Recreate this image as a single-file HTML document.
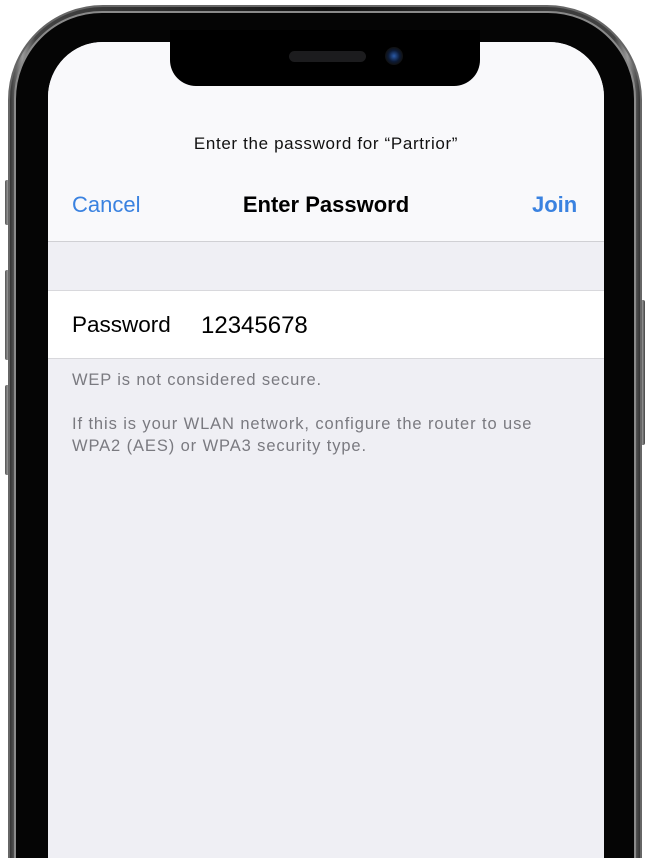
<!DOCTYPE html><html><head><style>
*{margin:0;padding:0;box-sizing:border-box}
html,body{width:650px;height:858px;overflow:hidden}
body{background:#fff;font-family:"Liberation Sans",sans-serif}
#w{position:relative;width:650px;height:858px;overflow:hidden}
.btn{position:absolute;background:linear-gradient(90deg,#555,#999,#444);border-radius:2px}
.steel{position:absolute;left:8px;top:5px;width:634px;height:960px;border-radius:95px;background:linear-gradient(90deg,#333,#999 2%,#444 4%,#111 50%,#444 96%,#999 98%,#333);border:2px solid #666}
.steel2{position:absolute;left:14px;top:11px;width:622px;height:950px;border-radius:88px;background:#050505;border:2px solid #8a8a8a}
.screen{position:absolute;left:48px;top:42px;width:556px;height:900px;border-radius:55px;background:#efeff4;overflow:hidden}
.notch{position:absolute;left:170px;top:30px;width:310px;height:56px;background:#000;border-radius:0 0 26px 26px}
.spk{position:absolute;left:289px;top:51px;width:77px;height:11px;border-radius:6px;background:#1c1c1e}
.cam{position:absolute;left:385px;top:47px;width:18px;height:18px;border-radius:50%;background:radial-gradient(circle,#2a5aa8 0,#0c1a35 45%,#111 70%)}
.top{position:absolute;left:0;top:0;width:556px;height:200px;background:#f9f9fb;border-bottom:1px solid #d0d0d4}
.t{position:absolute;white-space:nowrap}
</style></head><body><div id="w">
<div class="btn" style="left:5px;top:180px;width:6px;height:45px"></div>
<div class="btn" style="left:5px;top:270px;width:6px;height:90px"></div>
<div class="btn" style="left:5px;top:385px;width:6px;height:90px"></div>
<div class="btn" style="left:639px;top:300px;width:6px;height:145px"></div>
<div class="steel"></div><div class="steel2"></div>
<div class="screen">
<div class="top"></div>
<div class="t" style="left:0;width:556px;text-align:center;top:92px;font-size:17px;letter-spacing:.65px;color:#111">Enter the password for “Partrior”</div>
<div class="t" style="left:24px;top:150px;font-size:22px;color:#3a82e0">Cancel</div>
<div class="t" style="left:0;width:556px;text-align:center;top:150px;font-size:22px;font-weight:bold;color:#000">Enter Password</div>
<div class="t" style="left:484px;top:150px;font-size:22px;color:#3a82e0;font-weight:bold">Join</div>
<div style="position:absolute;left:0;top:248px;width:556px;height:69px;background:#fff;border-top:1px solid #d8d8dc;border-bottom:1px solid #d8d8dc"></div>
<div class="t" style="left:24px;top:270px;font-size:22.5px;color:#000">Password</div>
<div class="t" style="left:153px;top:270px;font-size:24px;color:#000">12345678</div>
<div class="t" style="left:24px;top:329px;font-size:16.5px;letter-spacing:.85px;color:#7a7a80">WEP is not considered secure.</div>
<div class="t" style="left:24px;top:371px;font-size:16.5px;letter-spacing:.9px;color:#7a7a80;line-height:22px">If this is your WLAN network, configure the router to use<br>WPA2 (AES) or WPA3 security type.</div>
</div>
<div class="notch"></div><div class="spk"></div><div class="cam"></div>
</div></body></html>
